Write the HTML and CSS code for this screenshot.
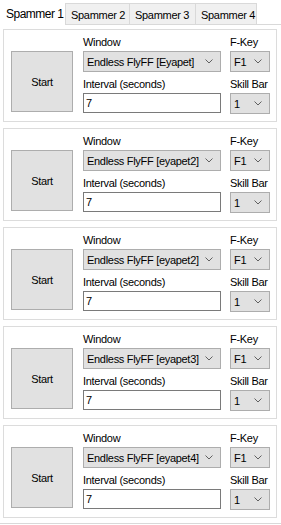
FILE: index.html
```html
<!DOCTYPE html>
<html lang="en">

<head>
    <meta charset="UTF-8">
    <meta name="viewport" content="width=device-width, initial-scale=1.0">
    <title>Spammer</title>
    <link rel="stylesheet" href="styles.css">
</head>

<body>
    <div class="tabs">
        <div class="tab active">Spammer 1</div>
        <div class="tab">Spammer 2</div>
        <div class="tab">Spammer 3</div>
        <div class="tab">Spammer 4</div>
    </div>

    <div class="page">
        <div class="box">
            <button class="start">Start</button>
            <div class="col-main">
                <div class="label">Window</div>
                <div class="combo"><span>Endless FlyFF [Eyapet]</span><svg class="chev" viewBox="0 0 8 5"><polyline points="0.5,0.5 4,4 7.5,0.5" /></svg></div>
                <div class="label gap">Interval (seconds)</div>
                <div class="textbox">7</div>
            </div>
            <div class="col-key">
                <div class="label">F-Key</div>
                <div class="combo"><span>F1</span><svg class="chev" viewBox="0 0 8 5"><polyline points="0.5,0.5 4,4 7.5,0.5" /></svg></div>
                <div class="label gap">Skill Bar</div>
                <div class="combo"><span>1</span><svg class="chev" viewBox="0 0 8 5"><polyline points="0.5,0.5 4,4 7.5,0.5" /></svg></div>
            </div>
        </div>

        <div class="box">
            <button class="start">Start</button>
            <div class="col-main">
                <div class="label">Window</div>
                <div class="combo"><span>Endless FlyFF [eyapet2]</span><svg class="chev" viewBox="0 0 8 5"><polyline points="0.5,0.5 4,4 7.5,0.5" /></svg></div>
                <div class="label gap">Interval (seconds)</div>
                <div class="textbox">7</div>
            </div>
            <div class="col-key">
                <div class="label">F-Key</div>
                <div class="combo"><span>F1</span><svg class="chev" viewBox="0 0 8 5"><polyline points="0.5,0.5 4,4 7.5,0.5" /></svg></div>
                <div class="label gap">Skill Bar</div>
                <div class="combo"><span>1</span><svg class="chev" viewBox="0 0 8 5"><polyline points="0.5,0.5 4,4 7.5,0.5" /></svg></div>
            </div>
        </div>

        <div class="box">
            <button class="start">Start</button>
            <div class="col-main">
                <div class="label">Window</div>
                <div class="combo"><span>Endless FlyFF [eyapet2]</span><svg class="chev" viewBox="0 0 8 5"><polyline points="0.5,0.5 4,4 7.5,0.5" /></svg></div>
                <div class="label gap">Interval (seconds)</div>
                <div class="textbox">7</div>
            </div>
            <div class="col-key">
                <div class="label">F-Key</div>
                <div class="combo"><span>F1</span><svg class="chev" viewBox="0 0 8 5"><polyline points="0.5,0.5 4,4 7.5,0.5" /></svg></div>
                <div class="label gap">Skill Bar</div>
                <div class="combo"><span>1</span><svg class="chev" viewBox="0 0 8 5"><polyline points="0.5,0.5 4,4 7.5,0.5" /></svg></div>
            </div>
        </div>

        <div class="box">
            <button class="start">Start</button>
            <div class="col-main">
                <div class="label">Window</div>
                <div class="combo"><span>Endless FlyFF [eyapet3]</span><svg class="chev" viewBox="0 0 8 5"><polyline points="0.5,0.5 4,4 7.5,0.5" /></svg></div>
                <div class="label gap">Interval (seconds)</div>
                <div class="textbox">7</div>
            </div>
            <div class="col-key">
                <div class="label">F-Key</div>
                <div class="combo"><span>F1</span><svg class="chev" viewBox="0 0 8 5"><polyline points="0.5,0.5 4,4 7.5,0.5" /></svg></div>
                <div class="label gap">Skill Bar</div>
                <div class="combo"><span>1</span><svg class="chev" viewBox="0 0 8 5"><polyline points="0.5,0.5 4,4 7.5,0.5" /></svg></div>
            </div>
        </div>

        <div class="box">
            <button class="start">Start</button>
            <div class="col-main">
                <div class="label">Window</div>
                <div class="combo"><span>Endless FlyFF [eyapet4]</span><svg class="chev" viewBox="0 0 8 5"><polyline points="0.5,0.5 4,4 7.5,0.5" /></svg></div>
                <div class="label gap">Interval (seconds)</div>
                <div class="textbox">7</div>
            </div>
            <div class="col-key">
                <div class="label">F-Key</div>
                <div class="combo"><span>F1</span><svg class="chev" viewBox="0 0 8 5"><polyline points="0.5,0.5 4,4 7.5,0.5" /></svg></div>
                <div class="label gap">Skill Bar</div>
                <div class="combo"><span>1</span><svg class="chev" viewBox="0 0 8 5"><polyline points="0.5,0.5 4,4 7.5,0.5" /></svg></div>
            </div>
        </div>
    </div>
</body></html>
```

FILE: styles.css
```css
body {
    margin: 0;
    background: #fff;
    font-family: "Liberation Sans", Arial, sans-serif;
    font-size: 11px;
    letter-spacing: -0.3px;
    color: #000;
}

.tabs {
    display: flex;
    height: 24px;
    border-bottom: 1px solid #d9d9d9;
}

.tab {
    box-sizing: border-box;
    margin-top: 3px;
    height: 21px;
    line-height: 22px;
    padding-left: 5px;
    background: #f0f0f0;
    border: 1px solid #d9d9d9;
    border-bottom: none;
    border-right: none;
}

.tab:nth-child(2) {
    width: 64px;
}

.tab:nth-child(3) {
    width: 66px;
}

.tab:last-child {
    width: 62px;
    border-right: 1px solid #d9d9d9;
}

.tab.active {
    width: 65px;
    margin-top: 0;
    height: 25px;
    margin-bottom: -1px;
    padding: 7px 0 0 6px;
    line-height: 14px;
    font-size: 12px;
    letter-spacing: -0.5px;
    background: #fff;
    border: none;
}

.page {
    display: flex;
    flex-direction: column;
    gap: 6px;
    padding: 4px 4px 5px 3px;
    border-bottom: 1px solid #d9d9d9;
}

.box {
    display: flex;
    height: 93px;
    box-sizing: border-box;
    border: 1px solid #dcdcdc;
    padding: 4px 0 0 7px;
}

.start {
    width: 62px;
    height: 61px;
    margin-top: 17px;
    margin-right: 10px;
    background: #e1e1e1;
    border: 1px solid #adadad;
    font: inherit;
    letter-spacing: inherit;
    color: #000;
    padding: 0;
}

.col-main {
    width: 138px;
    margin-right: 9px;
}

.col-key {
    width: 40px;
}

.label {
    height: 16px;
    line-height: 16px;
    margin-bottom: 1px;
    white-space: nowrap;
}

.label.gap {
    margin-top: 4px;
}

.combo {
    display: flex;
    align-items: center;
    justify-content: space-between;
    height: 21px;
    box-sizing: border-box;
    padding: 0 7px 0 3px;
    background: #e1e1e1;
    border: 1px solid #adadad;
    white-space: nowrap;
}

.chev {
    width: 8px;
    height: 5px;
    flex: none;
}

.chev polyline {
    fill: none;
    stroke: #606060;
    stroke-width: 1;
}

.textbox {
    height: 20px;
    line-height: 18px;
    box-sizing: border-box;
    padding: 0 2px;
    background: #fff;
    border: 1px solid #7a7a7a;
}
```
